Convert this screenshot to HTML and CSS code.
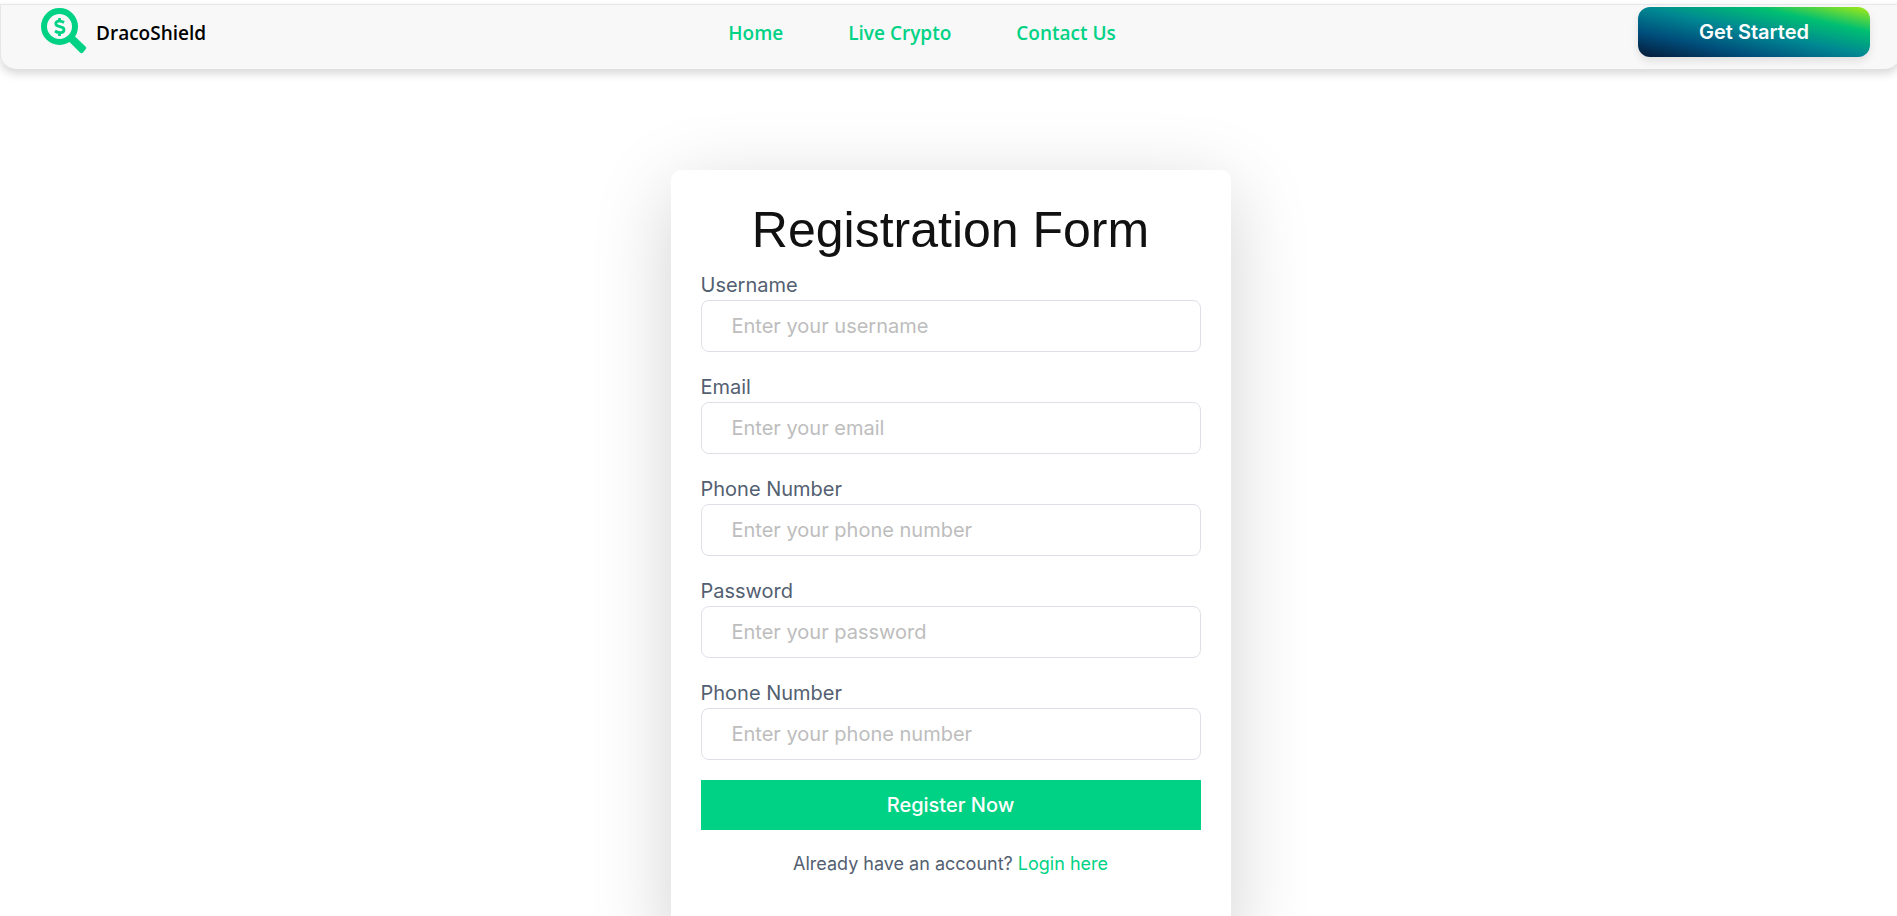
FILE: index.html
```html
<!DOCTYPE html>
<html lang="en">
<head>
<meta charset="utf-8">
<meta name="viewport" content="width=device-width, initial-scale=1">
<title>DracoShield</title>
<link rel="stylesheet" href="styles.css">
</head>
<body>
<header class="site-header">
  <a class="brand" href="#">
    <svg class="brand-icon" viewBox="0 0 46 46" aria-hidden="true">
      <path d="M33 27.500L44.500 38.500Q46 40 44.500 41.500L42 44.500Q40.500 46 39 44.500L28 33.500V29Z" fill="#00d285"/>
      <circle cx="18.500" cy="18.500" r="15.500" fill="#f8f8f8" stroke="#00d285" stroke-width="6"/>
      <path d="M18.500 10V13M18.500 24.500V28M23 14.500C20.500 12.800 14.800 12.300 14.800 15.800C14.800 20 23 17.300 23 21.700C23 25.300 17.500 25.500 14 23" fill="none" stroke="#00d285" stroke-width="2.800"/>
    </svg>
    <span>DracoShield</span>
  </a>
  <nav class="main-nav">
    <a href="#">Home</a>
    <a href="#">Live Crypto</a>
    <a href="#">Contact Us</a>
  </nav>
  <button class="get-started" type="button">Get Started</button>
</header>
<main class="page">
  <form class="card">
    <h1>Registration Form</h1>
    <div class="field">
      <label for="username">Username</label>
      <input id="username" type="text" placeholder="Enter your username">
    </div>
    <div class="field">
      <label for="email">Email</label>
      <input id="email" type="email" placeholder="Enter your email">
    </div>
    <div class="field">
      <label for="phone">Phone Number</label>
      <input id="phone" type="tel" placeholder="Enter your phone number">
    </div>
    <div class="field">
      <label for="password">Password</label>
      <input id="password" type="password" placeholder="Enter your password">
    </div>
    <div class="field">
      <label for="phone2">Phone Number</label>
      <input id="phone2" type="tel" placeholder="Enter your phone number">
    </div>
    <button class="submit" type="submit">Register Now</button>
    <p class="login">Already have an account? <a href="#">Login here</a></p>
  </form>
</main>
</body>
</html>
```
FILE: styles.css
```css
* {
  box-sizing: border-box;
}

body {
  margin: 0 -4px 0 0;
  padding-top: 4px;
  background: #fff;
  font-family: Inter, "Liberation Sans", sans-serif;
  overflow: hidden;
}

a {
  color: #00d285;
  text-decoration: none;
}

.site-header {
  display: flex;
  align-items: flex-start;
  justify-content: space-between;
  padding: 2px 30px 12px 40px;
  border: 1px solid #e5e7eb;
  border-bottom-color: #e0e0e0;
  border-radius: 0 0 16px 16px;
  background: #f8f8f8;
  box-shadow: 0 4px 8px rgba(0, 0, 0, 0.15);
  font-family: "Open Sans", "Noto Sans", sans-serif;
  font-size: 19px;
  font-weight: 600;
  line-height: 52px;
}

.brand {
  display: flex;
  gap: 9px;
  height: 50px;
  color: #000;
}

.brand-icon {
  width: 46px;
  height: 46px;
  margin-top: 1px;
}

.main-nav {
  display: flex;
  gap: 65px;
  height: 50px;
}

.get-started {
  width: 232px;
  height: 50px;
  border: 0;
  border-radius: 12px;
  background: linear-gradient(to right top, #051937, #004d7a, #008793, #00bf72, #a8eb12);
  box-shadow: 0 4px 8px rgba(0, 0, 0, 0.1);
  color: #fff;
  font: 600 20px Inter, sans-serif;
}

.page {
  padding: 100px 16px 0;
}

.card {
  max-width: 560px;
  margin: 0 auto;
  padding: 30px 30px 70px;
  border-radius: 10px;
  background: #fff;
  box-shadow: 0 20px 80px rgba(0, 0, 0, 0.18);
}

h1 {
  margin: 0 0 10px;
  color: #111;
  font: 400 50px/60px "Liberation Sans", Arial, sans-serif;
  text-align: center;
}

.field {
  display: flex;
  flex-direction: column;
  margin-bottom: 20px;
  color: #536071;
  font-size: 20px;
  line-height: 30px;
}

.field input {
  height: 52px;
  padding: 0 30px;
  border: 1px solid #dde0e6;
  border-radius: 8px;
  background: #fff;
  font: 400 20px Inter, sans-serif;
}

.field input::placeholder {
  color: #bdbdbd;
}

.submit {
  width: 100%;
  height: 50px;
  border: 0;
  background: #00d285;
  color: #fff;
  font: 500 20px Inter, sans-serif;
}

.login {
  margin: 20px 0 0;
  color: #536071;
  font-size: 18px;
  line-height: 27px;
  text-align: center;
}
```
